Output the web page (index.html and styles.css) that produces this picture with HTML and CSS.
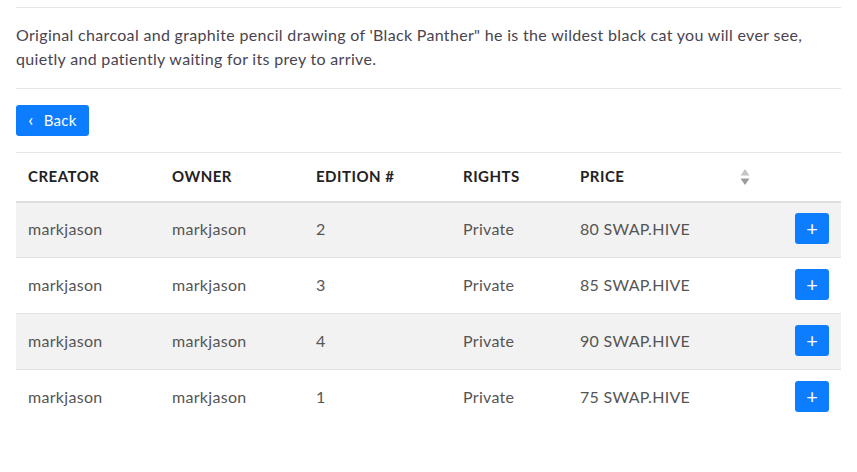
FILE: index.html
```html
<!DOCTYPE html>
<html lang="en">
<head>
  <meta charset="UTF-8" />
  <title>Black Panther</title>
  <link rel="stylesheet" href="styles.css">
</head>
<body>
  <div class="wrap">
    <p class="desc">Original charcoal and graphite pencil drawing of 'Black Panther" he is the wildest black cat you will ever see, quietly and patiently waiting for its prey to arrive.</p>

    <button class="btn back-btn"><span class="chev">&lsaquo;</span> Back</button>

    <table class="editions">
      <thead>
        <tr>
          <th class="c-creator">CREATOR</th>
          <th class="c-owner">OWNER</th>
          <th class="c-edition">EDITION #</th>
          <th class="c-rights">RIGHTS</th>
          <th class="c-price">PRICE
            <svg class="sort" width="10" height="18" viewBox="0 0 10 18"><path d="M5 1 L9.5 7.5 H0.5 Z" fill="#c4c4c4"/><path d="M5 17 L9.5 10.5 H0.5 Z" fill="#9b9b9b"/></svg>
          </th>
          <th class="c-action"></th>
        </tr>
      </thead>
      <tbody>
        <tr>
          <td>markjason</td><td>markjason</td><td>2</td><td>Private</td><td>80 SWAP.HIVE</td>
          <td class="c-action"><button class="btn add-btn">+</button></td>
        </tr>
        <tr>
          <td>markjason</td><td>markjason</td><td>3</td><td>Private</td><td>85 SWAP.HIVE</td>
          <td class="c-action"><button class="btn add-btn">+</button></td>
        </tr>
        <tr>
          <td>markjason</td><td>markjason</td><td>4</td><td>Private</td><td>90 SWAP.HIVE</td>
          <td class="c-action"><button class="btn add-btn">+</button></td>
        </tr>
        <tr>
          <td>markjason</td><td>markjason</td><td>1</td><td>Private</td><td>75 SWAP.HIVE</td>
          <td class="c-action"><button class="btn add-btn">+</button></td>
        </tr>
      </tbody>
    </table>
  </div>
</body>
</html>
```

FILE: styles.css
```css
* { box-sizing: border-box; }

body {
  margin: 0;
  font-family: 'Lato', 'Open Sans', sans-serif;
  background-color: white;
  color: #444;
}

.wrap {
  padding: 7px 16px 0 16px;
}

.desc {
  margin: 0;
  border-top: 1px solid #e6e6e6;
  border-bottom: 1px solid #e6e6e6;
  padding: 15px 0 17px;
  font-size: 16px;
  line-height: 24px;
  letter-spacing: 0.32px;
  color: #4a4450;
}

.btn {
  background-color: #0d7dff;
  color: white;
  border: none;
  border-radius: 3px;
  cursor: pointer;
  font-family: inherit;
}

.back-btn {
  margin-top: 16px;
  height: 31px;
  width: 73px;
  font-size: 15px;
  letter-spacing: 0.3px;
  padding: 0 0 3px 0;
}

.back-btn .chev {
  font-size: 18px;
  margin-right: 6px;
}

.editions {
  margin-top: 16px;
  width: 100%;
  border-collapse: collapse;
  font-size: 16px;
}

.editions th {
  text-align: left;
  font-weight: bold;
  font-size: 15px;
  letter-spacing: 0.5px;
  color: #222;
  height: 49px;
  padding: 0 12px 1px;
  border-top: 1px solid #e6e6e6;
  border-bottom: 2px solid #dedede;
}

.editions td {
  height: 56px;
  padding: 0 12px 2px;
  border-bottom: 1px solid #e2e2e2;
  color: #555;
  letter-spacing: 0.3px;
}

.editions tbody tr:nth-child(odd) {
  background-color: #f2f2f2;
}

.editions tbody tr:last-child td {
  border-bottom: none;
}

.c-creator { width: 144px; }
.c-owner { width: 144px; }
.c-edition { width: 147px; }
.c-rights { width: 117px; }
.c-price { width: 194px; position: relative; }

.sort {
  position: absolute;
  right: 12px;
  top: 15px;
}

.editions .c-action {
  text-align: right;
}

.add-btn {
  width: 34px;
  height: 31px;
  font-size: 20px;
  line-height: 31px;
  padding: 0;
}
```
